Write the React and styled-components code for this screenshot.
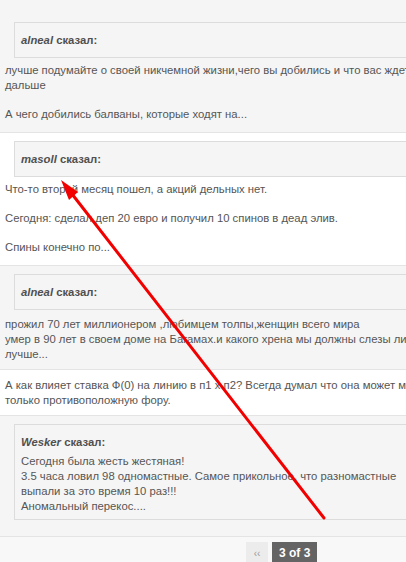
import styled, { createGlobalStyle } from "styled-components";

const GlobalStyle = createGlobalStyle`
  html, body {
    margin: 0;
    padding: 0;
    background: #f5f5f5;
    overflow: hidden;
  }
  body {
    font-family: "Liberation Sans", Arial, sans-serif;
    font-size: 11.3px;
    line-height: 15px;
    color: #555;
  }
`;

const posts = [
  {
    grey: true,
    first: true,
    bottom: 10,
    quote: { name: "alneal" },
    text: [
      "лучше подумайте о своей никчемной жизни,чего вы добились и что вас ждет дальше",
      "",
      "А чего добились балваны, которые ходят на...",
    ],
  },
  {
    grey: false,
    bottom: 10,
    quote: { name: "masoll" },
    text: [
      "Что-то второй месяц пошел, а акций дельных нет.",
      "",
      "Сегодня: сделал деп 20 евро и получил 10 спинов в деад элив.",
      "",
      "Спины конечно по...",
    ],
  },
  {
    grey: true,
    bottom: 7,
    gap: 7,
    quote: { name: "alneal" },
    text: [
      "прожил 70 лет миллионером ,любимцем толпы,женщин всего мира",
      "умер в 90 лет в своем доме на Багамах.и какого хрена мы должны слезы лить лучше...",
    ],
  },
  {
    grey: false,
    bottom: 7,
    text: [
      "А как влияет ставка Ф(0) на линию в п1 х п2? Всегда думал что она может менять только противоположную фору.",
    ],
  },
  {
    grey: true,
    bottom: 11,
    quote: {
      name: "Wesker",
      body: [
        "Сегодня была жесть жестяная!",
        "3.5 часа ловил 98 одномастные. Самое прикольное, что разномастные выпали за это время 10 раз!!!",
        "Аномальный перекос....",
      ],
    },
    text: [],
  },
];

export default function App() {
  return (
    <>
      <GlobalStyle />
      <Page>
        {posts.map((post, idx) => (
          <Row key={idx} $grey={post.grey} $first={post.first} $bottom={post.bottom}>
            {post.quote && (
              <Quote $gap={post.gap}>
                <QuoteHead>
                  <em>{post.quote.name}</em> сказал:
                </QuoteHead>
                {post.quote.body && (
                  <div>
                    {post.quote.body.map((line, i) => (
                      <div key={i}>{line}</div>
                    ))}
                  </div>
                )}
              </Quote>
            )}
            {post.text.length > 0 && (
              <div>
                {post.text.map((line, i) =>
                  line ? <div key={i}>{line}</div> : <Blank key={i} />
                )}
              </div>
            )}
          </Row>
        ))}
        <Footer>
          <PageNav>
            <PageLink>‹‹</PageLink>
            <PageCurrent>3 of 3</PageCurrent>
          </PageNav>
        </Footer>
      </Page>
      <Arrow viewBox="0 0 406 562" width="406" height="562">
        <line x1="324" y1="518" x2="72" y2="194" stroke="#f20000" strokeWidth="3" strokeLinecap="round" />
        <polygon points="61,180 78,192 69,200" fill="#f20000" />
      </Arrow>
    </>
  );
}

const Page = styled.div`
  width: 446px;
`;

const Row = styled.div`
  background: ${(p) => (p.$grey ? "#f5f5f5" : "#ffffff")};
  border-top: ${(p) => (p.$first ? "none" : "1px solid #e4e4e4")};
  padding: ${(p) => (p.$first ? "22px" : "8px")} 5px ${(p) => p.$bottom || 9}px;
`;

const Quote = styled.div`
  margin: 0 9px ${(p) => p.$gap || 5}px;
  background: #f5f5f5;
  border: 1px solid #dcdcdc;
  padding: 10px 6px 5px;
`;

const QuoteHead = styled.div`
  font-weight: bold;
  color: #505050;
  margin-bottom: 4px;

  em {
    font-style: italic;
  }
`;

const Blank = styled.div`
  height: 14px;
`;

const Footer = styled.div`
  background: #f8f8f8;
  border-top: 1px solid #e4e4e4;
  padding: 5px 0 10px 246px;
`;

const PageNav = styled.div`
  display: flex;
  gap: 4px;
`;

const PageLink = styled.span`
  width: 22px;
  height: 23px;
  display: flex;
  align-items: center;
  justify-content: center;
  background: #ececec;
  color: #999;
  font-size: 10px;
`;

const PageCurrent = styled.span`
  height: 23px;
  padding: 0 7px;
  display: flex;
  align-items: center;
  background: #646464;
  color: #fff;
  font-weight: bold;
  font-size: 12px;
`;

const Arrow = styled.svg`
  position: absolute;
  top: 0;
  left: 0;
  pointer-events: none;
`;
